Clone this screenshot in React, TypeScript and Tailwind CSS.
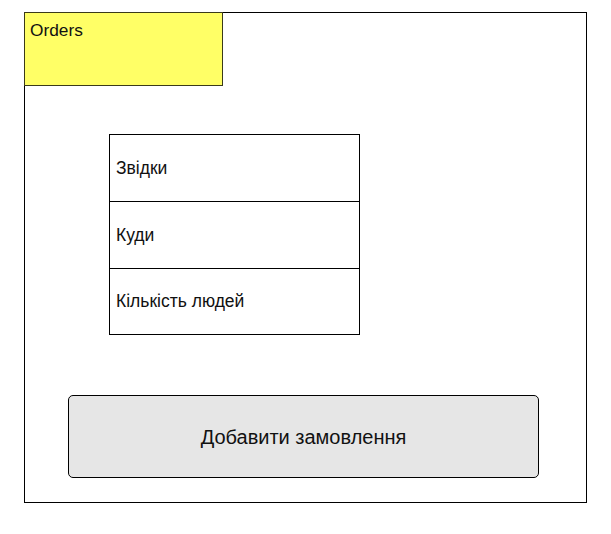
export default function App() {
    const rows = ['Звідки', 'Куди', 'Кількість людей'];

    return (
        <div className="w-[611px] h-[534px] bg-white font-['Liberation_Sans',Arial,sans-serif] text-[#111] pt-[12px] pl-[24px]">
            <div className="w-[563px] h-[491px] border border-black flex flex-col">
                <div className="-ml-px -mt-px w-[199px] h-[74px] bg-[#ffff66] border border-[#3a3a1a] px-[5px] pt-[7px] text-[17.3px] leading-[20px]">
                    Orders
                </div>

                <div className="ml-[84px] mt-[48px] w-[251px] flex flex-col border border-black">
                    {rows.map((r, i) => (
                        <div
                            key={r}
                            className={`flex items-center px-[6px] text-[17.5px] ${i > 0 ? 'border-t border-black' : ''} ${i === 1 ? 'h-[67px]' : 'h-[66px]'}`}
                        >
                            {r}
                        </div>
                    ))}
                </div>

                <button className="ml-[43px] mt-[60px] w-[471px] h-[83px] rounded-[5px] border border-black bg-[#e6e6e6] text-[20px] flex items-center justify-center">
                    Добавити замовлення
                </button>
            </div>
        </div>
    );
}
